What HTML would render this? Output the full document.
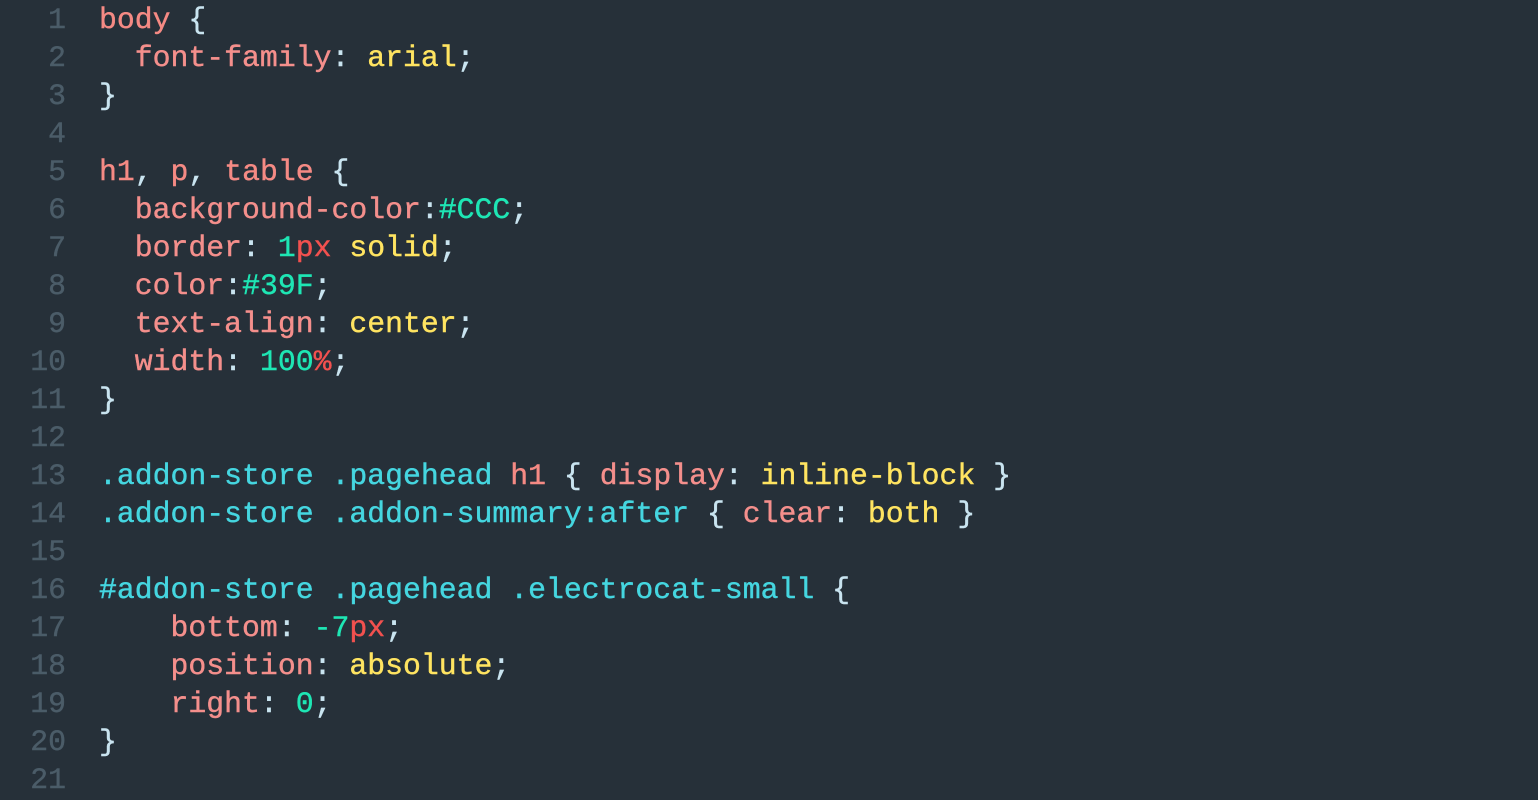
<!DOCTYPE html>
<html><head><meta charset="utf-8"><style>
html,body{margin:0;padding:0;background:#263039;width:1538px;height:800px;overflow:hidden}
.w{position:absolute;left:0;top:1px;font-family:"Liberation Mono","DejaVu Sans Mono",monospace;font-size:29.8px;line-height:38px;white-space:pre;-webkit-text-stroke:0.4px currentColor}
.n{position:absolute;left:0;width:66px;text-align:right;color:#4b5c68}
.c{position:absolute;left:99px;color:#c9e4f0}
.k{color:#f48f8c}.s{color:#f58a84}.v{color:#ffe461}.num{color:#1ee6b4}.u{color:#f2514f}.cl{color:#45d6e0}
</style></head><body>
<div class="w"><div class="n">1
2
3
4
5
6
7
8
9
10
11
12
13
14
15
16
17
18
19
20
21</div><div class="c"><span class="s">body</span> {
  <span class="k">font-family</span>: <span class="v">arial</span>;
}

<span class="s">h1</span>, <span class="s">p</span>, <span class="s">table</span> {
  <span class="k">background-color</span>:<span class="num">#CCC</span>;
  <span class="k">border</span>: <span class="num">1</span><span class="u">px</span> <span class="v">solid</span>;
  <span class="k">color</span>:<span class="num">#39F</span>;
  <span class="k">text-align</span>: <span class="v">center</span>;
  <span class="k">width</span>: <span class="num">100</span><span class="u">%</span>;
}

<span class="cl">.addon-store .pagehead</span> <span class="s">h1</span> { <span class="k">display</span>: <span class="v">inline-block</span> }
<span class="cl">.addon-store .addon-summary:after</span> { <span class="k">clear</span>: <span class="v">both</span> }

<span class="cl">#addon-store .pagehead .electrocat-small</span> {
    <span class="k">bottom</span>: <span class="num">-7</span><span class="u">px</span>;
    <span class="k">position</span>: <span class="v">absolute</span>;
    <span class="k">right</span>: <span class="num">0</span>;
}</div></div>
</body></html>
